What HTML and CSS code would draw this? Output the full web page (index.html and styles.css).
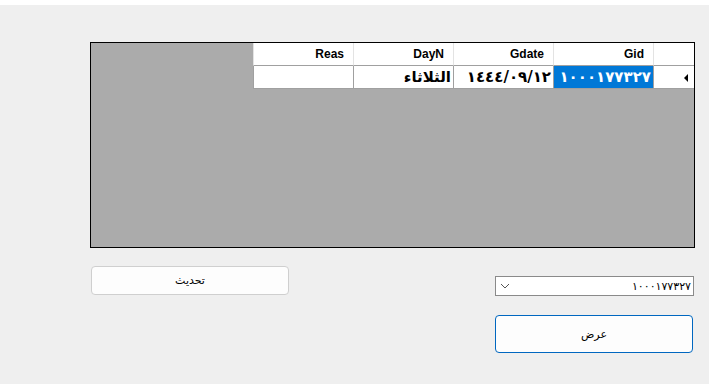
FILE: index.html
```html
<!doctype html>
<html lang="ar">
<head>
    <title>Form1</title>
    <meta charset="utf-8" />
    <link rel="stylesheet" href="styles.css">
</head>
<body>
    <!-- White strip on top of the form -->
    <div class="top-strip"></div>

    <div class="form-body">
        <!-- Data grid -->
        <div class="grid-box">
            <table class="grid">
                <tr class="grid-head">
                    <th class="row-head"></th>
                    <th>Gid</th>
                    <th>Gdate</th>
                    <th>DayN</th>
                    <th>Reas</th>
                </tr>
                <tr class="grid-row">
                    <td class="row-head"><span class="row-arrow"></span></td>
                    <td class="selected">١٠٠٠١٧٧٣٢٧</td>
                    <td>١٤٤٤/٠٩/١٢</td>
                    <td>الثلاثاء</td>
                    <td></td>
                </tr>
            </table>
        </div>

        <!-- Controls under the grid -->
        <div class="controls">
            <button class="btn">تحديث</button>
            <div class="right-col">
                <div class="combo">
                    <span class="combo-text">١٠٠٠١٧٧٣٢٧</span>
                    <svg class="combo-arrow" width="10" height="6" viewBox="0 0 10 6">
                        <path d="M1 1 L5 5 L9 1" fill="none" stroke="#555" stroke-width="1"/>
                    </svg>
                </div>
                <button class="btn btn-default">عرض</button>
            </div>
        </div>
    </div>
</body>
</html>
```

FILE: styles.css
```css
body {
    margin: 0;
    height: 384px;
    overflow: hidden;
    background-color: #efefef;
    font-family: 'DejaVu Sans', 'Liberation Sans', sans-serif;
}

.top-strip {
    height: 5px;
    background-color: #fff;
}

.form-body {
    padding: 37px 0 0 90px;
}

/* Grid */
.grid-box {
    width: 605px;
    height: 206px;
    box-sizing: border-box;
    border: 1px solid #000;
    background-color: #ababab;
    display: flex;
    justify-content: flex-end;
    align-items: flex-start;
}

.grid {
    direction: rtl;
    table-layout: fixed;
    width: 441px;
    border-collapse: separate;
    border-spacing: 0;
    background-color: #fff;
}

.grid th,
.grid td {
    width: 100px;
    box-sizing: border-box;
    padding: 0 9px 0 4px;
    text-align: right;
    white-space: nowrap;
    overflow: hidden;
}

.grid-head th {
    height: 23px;
    font-family: 'Liberation Sans', sans-serif;
    font-size: 12px;
    font-weight: bold;
    color: #000;
    border-left: 1px solid #e3e3e3;
    border-bottom: 1px solid #a0a0a0;
}

.grid-row td {
    height: 23px;
    font-size: 15px;
    font-weight: bold;
    color: #000;
    border-left: 1px solid #a0a0a0;
    border-bottom: 1px solid #a0a0a0;
    padding: 0 2px 0 1px;
}

.grid .row-head {
    width: 41px;
    padding: 0;
}

.grid-row .row-head {
    text-align: right;
    padding-right: 6px;
}

.row-arrow {
    display: inline-block;
    width: 0;
    height: 0;
    border-top: 4px solid transparent;
    border-bottom: 4px solid transparent;
    border-right: 4px solid #000;
    vertical-align: middle;
}

.grid-row td.selected {
    background-color: #0078d7;
    color: #fff;
}

/* Controls */
.controls {
    width: 604px;
    margin-top: 18px;
    padding-left: 1px;
    box-sizing: border-box;
    display: flex;
    justify-content: space-between;
    align-items: flex-start;
}

.btn {
    width: 198px;
    height: 29px;
    border: 1px solid #cfcfcf;
    border-radius: 4px;
    background-color: #fdfdfd;
    font-family: 'DejaVu Sans', sans-serif;
    font-size: 11px;
    color: #000;
    padding: 0;
}

.right-col {
    display: flex;
    flex-direction: column;
    gap: 19px;
    padding-top: 10px;
}

.combo {
    width: 199px;
    height: 20px;
    box-sizing: border-box;
    border: 1px solid #8a8a8a;
    background-color: #fff;
    display: flex;
    flex-direction: row-reverse;
    justify-content: space-between;
    align-items: center;
    padding: 0 2px 0 4px;
}

.combo-text {
    font-size: 11px;
    color: #000;
}

.btn-default {
    height: 38px;
    border: 1px solid #0067c0;
}
```
